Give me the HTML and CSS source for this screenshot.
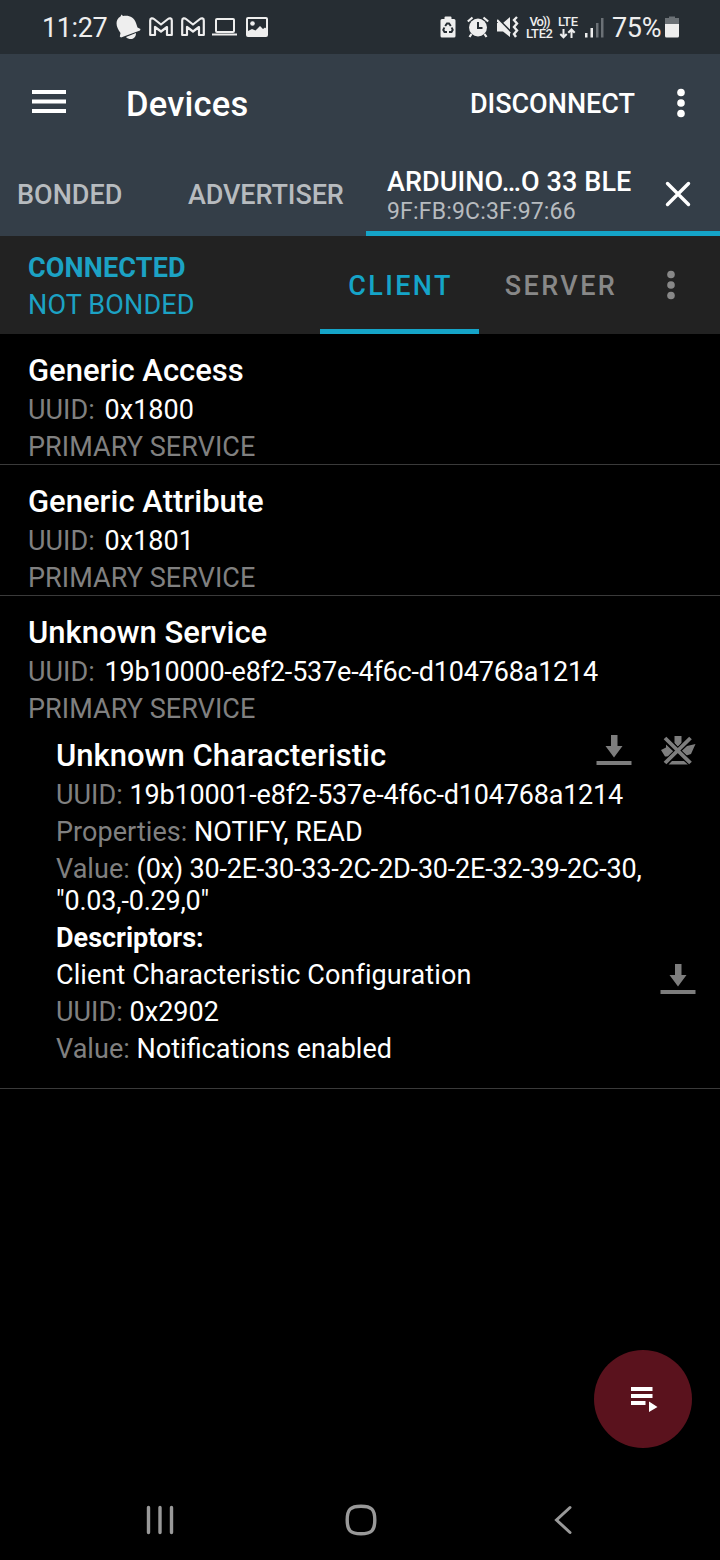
FILE: index.html
```html
<!DOCTYPE html>
<html lang="en">
<head>
<meta charset="utf-8">
<title>Devices</title>
<link rel="stylesheet" href="styles.css">
</head>
<body>
<div class="screen">
  <div class="status">
    <span class="clock">11:27</span>
    <svg class="bell" width="26" height="28" viewBox="0 0 26 28" fill="#eee"><path d="M4.500 3.500 5.500 1.500 7 3C13 2 18 4 20 10L21.500 14.500 24.500 16 24 17.500 5 24.500 3.800 23.500 4.500 20C0 14 -1.500 7 4.500 3.500Z"/><path d="M10 24 20 20C20 23.500 18 26 15 26 13 26 11 25.500 10 24Z"/></svg>
    <svg class="mail" width="24" height="20" viewBox="0 0 24 20" fill="none" stroke="#eee" stroke-width="2.200" stroke-linejoin="round"><path d="M1.200 3.500C1.200 1 3.500.800 5 2L12 7.500 19 2C20.500.800 22.800 1 22.800 3.500V18H18V10L12 14.500 6 10V18H1.200Z"/></svg>
    <svg class="mail" width="24" height="20" viewBox="0 0 24 20" fill="none" stroke="#eee" stroke-width="2.200" stroke-linejoin="round"><path d="M1.200 3.500C1.200 1 3.500.800 5 2L12 7.500 19 2C20.500.800 22.800 1 22.800 3.500V18H18V10L12 14.500 6 10V18H1.200Z"/></svg>
    <svg class="laptop" width="25" height="20" viewBox="0 0 25 20"><rect x="4" y="2" width="18" height="13" rx="1" fill="none" stroke="#eee" stroke-width="2"/><path d="M0 16.500H25V18.500H0Z" fill="#eee"/></svg>
    <svg class="photo" width="22" height="20" viewBox="0 0 22 20"><rect x="1" y="1" width="20" height="18" rx="1" fill="none" stroke="#eee" stroke-width="2"/><circle cx="6.500" cy="6.500" r="2.300" fill="#eee"/><path d="M1 14.500 6 12 9.500 13.500 14 9 17 12 19 10.500 21 12V19H1Z" fill="#eee"/></svg>
    <div class="status-right">
      <svg width="16" height="22" viewBox="0 0 16 22"><path d="M4.500 3V1.500Q4.500.500 5.500.500H10.500Q11.500.500 11.500 1.500V3H14Q15.500 3 15.500 4.500V20Q15.500 21.500 14 21.500H2Q.500 21.500.500 20V4.500Q.500 3 2 3Z" fill="#eee"/><g fill="none" stroke="#262d33" stroke-width="2"><path d="M5.200 10 7 7.500H9L10.800 10"/><path d="M4.300 11.500 3.300 14 4.500 16H7"/><path d="M11.700 11.500 12.700 14 11.500 16H9"/></g></svg>
      <svg class="alarm" width="22" height="22" viewBox="0 0 22 22"><circle cx="11" cy="11.500" r="9" fill="#eee"/><path d="M.8 5.500 5.500 1.500M21.200 5.500 16.500 1.500M4.500 18 2.500 21M17.500 18 19.500 21" fill="none" stroke="#eee" stroke-width="2.200"/><path d="M11 6V12H15.500" fill="none" stroke="#262d33" stroke-width="2"/></svg>
      <svg class="mute" width="22" height="22" viewBox="0 0 22 22"><path d="M0 7H6L13 1V21L6 15.500H0Z" fill="#eee"/><path d="M0 2 14 16" stroke="#262d33" stroke-width="2"/><path d="M0 4 13 17.500" stroke="#eee" stroke-width="2.400"/><path d="M20 1 17 4 20 7.500 17 11 20 14.500 17 18 19 21" fill="none" stroke="#eee" stroke-width="2.400"/></svg>
      <svg class="volte" width="54" height="26" viewBox="0 0 54 26"><g class="tiny"><text x="3.500" y="11.500" textLength="21">Vo))</text><text x="0" y="23.500" textLength="27">LTE2</text><text x="32" y="12" textLength="20">LTE</text></g><path d="M37.500 15V23M34.300 20 37.500 23.300 40.700 20M45.500 24V15.500M42.300 18.800 45.500 15.500 48.700 18.800" fill="none" stroke="#eee" stroke-width="2"/></svg>
      <svg class="signal" width="19" height="21" viewBox="0 0 19 21"><path d="M0 16H2.500V20.500H0ZM5.500 11H8V20.500H5.500Z" fill="#eee"/><path d="M11 6H13.500V20.500H11ZM16 1H18.500V20.500H16Z" fill="#6b7176"/></svg>
      <span class="percent">75%</span>
      <svg class="battery" width="14" height="22" viewBox="0 0 14 22"><path d="M4 2V.5H10V2H14V8H0V2Z" fill="#6b7176"/><path d="M0 8H14V20Q14 21.500 12.500 21.500H1.500Q0 21.500 0 20Z" fill="#eee"/></svg>
    </div>
  </div>

  <div class="toolbar">
    <svg class="menu" width="34" height="24" viewBox="0 0 34 24" fill="#fff"><path d="M0 0H34V4H0ZM0 9.500H34V13.500H0ZM0 19H34V23H0Z"/></svg>
    <h1 class="title">Devices</h1>
    <span class="disconnect">DISCONNECT</span>
    <svg class="dots" width="8" height="30" viewBox="0 0 8 30" fill="#fff"><circle cx="4" cy="4.500" r="3.800"/><circle cx="4" cy="15" r="3.800"/><circle cx="4" cy="25.500" r="3.800"/></svg>
  </div>

  <div class="tabs">
    <span class="tab bonded">BONDED</span>
    <span class="tab advertiser">ADVERTISER</span>
    <div class="tab-device">
      <div>
        <div class="device-name">ARDUINO…O 33 BLE</div>
        <div class="device-mac">9F:FB:9C:3F:97:66</div>
      </div>
      <svg class="close" width="26" height="26" viewBox="0 0 26 26" fill="none" stroke="#fff" stroke-width="3.400" stroke-linecap="round"><path d="M2.500 2.500 23.500 23.500M23.500 2.500 2.500 23.500"/></svg>
    </div>
  </div>

  <div class="connection">
    <div class="state"><div class="connected">CONNECTED</div><div class="not-bonded">NOT BONDED</div></div>
    <div class="subtab active">CLIENT</div>
    <div class="subtab">SERVER</div>
    <svg class="more" width="8" height="30" viewBox="0 0 8 30" fill="#888"><circle cx="4" cy="4.500" r="3.800"/><circle cx="4" cy="15" r="3.800"/><circle cx="4" cy="25.500" r="3.800"/></svg>
  </div>

  <div class="service">
    <h2>Generic Access</h2>
    <p class="gap"><i>UUID:</i> 0x1800</p>
    <p><i>PRIMARY SERVICE</i></p>
  </div>
  <div class="service">
    <h2>Generic Attribute</h2>
    <p class="gap"><i>UUID:</i> 0x1801</p>
    <p><i>PRIMARY SERVICE</i></p>
  </div>
  <div class="service last">
    <h2>Unknown Service</h2>
    <p class="gap"><i>UUID:</i> <span class="hex">19b10000-e8f2-537e-4f6c-d104768a1214</span></p>
    <p><i>PRIMARY SERVICE</i></p>
    <div class="characteristic">
      <div class="row">
        <h2>Unknown Characteristic</h2>
        <div class="actions">
          <svg width="36" height="32" viewBox="0 0 36 32" fill="#7d7d7d"><path d="M15 0H21.500V11H26.500L18 22.500 9.500 11H15ZM.5 26H35.500V30H.5Z"/></svg>
          <svg class="notify" width="36" height="32" viewBox="0 0 36 32"><path d="M14.500 1H21.500V8L18 12 14.500 8ZM1 15 6 12.500 6 9.500 14 17 9 21.500 5 21.500ZM35.500 9 31 19 26.500 20.500 21 16.500 27 11ZM8.500 29.500 12 26H24L28 29.500Z" fill="#7d7d7d"/><path d="M5 3 30.500 28M30.500 3 5 28" stroke="#000" stroke-width="5.500"/><path d="M5 3 30.500 28M30.500 3 5 28" stroke="#7d7d7d" stroke-width="3.800"/></svg>
        </div>
      </div>
      <p><i>UUID:</i> <span class="hex">19b10001-e8f2-537e-4f6c-d104768a1214</span></p>
      <p><i>Properties:</i> NOTIFY, READ</p>
      <p><i>Value:</i> <span class="hex">(0x) 30-2E-30-33-2C-2D-30-2E-32-39-2C-30,<br>"0.03,-0.29,0"</span></p>
      <p><b>Descriptors:</b></p>
      <div class="row">
        <p class="descriptor">Client Characteristic Configuration</p>
        <svg class="read" width="36" height="32" viewBox="0 0 36 32" fill="#7d7d7d"><path d="M15 0H21.500V11H26.500L18 22.500 9.500 11H15ZM.5 26H35.500V30H.5Z"/></svg>
      </div>
      <p><i>UUID:</i> 0x2902</p>
      <p><i>Value:</i> Notifications enabled</p>
    </div>
  </div>

  <div class="bottom">
    <div class="fab"><svg width="28" height="27" viewBox="0 0 28 27" fill="#fff"><path d="M0 1H21.500V5H0ZM0 8H21.500V12H0ZM0 15H14.500V19H0ZM18 15.500 26.500 21 18 26Z"/></svg></div>
    <div class="nav">
      <svg width="28" height="30" viewBox="0 0 28 30" stroke="#999" stroke-width="3.400" stroke-linecap="round"><path d="M2.500 2.500V27.500M14 2.500V27.500M25.500 2.500V27.500"/></svg>
      <svg class="home" width="32" height="32" viewBox="0 0 32 32" fill="none" stroke="#999" stroke-width="3.400"><path d="M16 2.200C26.500 2.200 29.800 5.500 29.800 16S26.500 29.800 16 29.800 2.200 26.500 2.200 16 5.500 2.200 16 2.200Z"/></svg>
      <svg width="18" height="30" viewBox="0 0 18 30" fill="none" stroke="#999" stroke-width="3" stroke-linecap="round"><path d="M16 2.500 2.500 15 16 27.500"/></svg>
    </div>
  </div>
</div>
</body>
</html>
```
FILE: styles.css
```css
* { box-sizing: border-box; }
body { margin: 0; background: #000; }
svg { display: block; flex: none; }
h1, h2, p { margin: 0; }
i { font-style: normal; color: #808080; letter-spacing: 0.05px; }
.screen {
  width: 720px; height: 1560px; overflow: hidden;
  display: flex; flex-direction: column;
  background: #000; color: #fff;
  font-family: Roboto, "Liberation Sans", sans-serif;
  font-size: 27px; line-height: 32px; white-space: nowrap;
}

.status { height: 54px; flex: none; display: flex; align-items: center; padding: 0 41px 0 42px; background: #262d33; color: #eee; }
.clock { width: 74px; padding-top: 2px; font-size: 27px; letter-spacing: -0.4px; }
.bell { margin-top: -1px; }
.mail { margin-left: 7px; }
.mail + .mail { margin-left: 8px; }
.laptop { margin-left: 7px; }
.photo { margin-left: 9px; }
.status-right { margin-left: auto; display: flex; align-items: center; }
.alarm { margin-left: 11px; }
.mute { margin-left: 8px; }
.volte { margin-left: 7px; }
.tiny { font-size: 13px; font-weight: 500; fill: #eee; }
.signal { margin-left: 5px; }
.percent { margin-left: 8px; padding-top: 2px; width: 48px; letter-spacing: -0.3px; }
.battery { margin-left: 5px; }

.toolbar { height: 100px; flex: none; display: flex; align-items: center; padding: 0 35px 0 32px; background: #343e48; }
.menu { margin-top: -4px; }
.title { margin-left: 60px; font-size: 34.5px; font-weight: 500; letter-spacing: 0.2px; }
.disconnect { margin-left: auto; font-weight: 500; }
.dots { margin: -2px 0 0 42px; }

.tabs { height: 82px; flex: none; display: flex; background: #343e48; }
.tab { padding-top: 25px; color: #b7bbbf; font-weight: 500; }
.bonded { width: 188px; padding-left: 17px; }
.advertiser { width: 178px; letter-spacing: -0.1px; }
.tab-device { flex: 1; display: flex; align-items: flex-start; padding: 12px 29px 0 21px; border-bottom: 5px solid #15a4c8; }
.device-name { font-weight: 500; letter-spacing: 0.1px; }
.device-mac { font-size: 23px; line-height: 27px; letter-spacing: 0.18px; color: #b7bbbf; }
.close { margin: 15px 0 0 auto; }

.connection { height: 98px; flex: none; display: flex; align-items: flex-start; padding-left: 28px; background: #222; }
.state { width: 292px; padding-top: 16px; color: #1ca2c4; letter-spacing: 0.15px; }
.connected { margin-bottom: 5px; font-weight: 700; }
.subtab { width: 159px; height: 98px; padding: 34px 0 0 5px; text-align: center; font-weight: 500; letter-spacing: 2.400px; color: #888; }
.subtab.active { padding-left: 2px; color: #15a4c8; border-bottom: 5px solid #15a4c8; }
.more { margin: 34px 0 0 29px; }

.service { flex: none; display: flex; flex-direction: column; gap: 5px; padding: 18px 25px 1px 28px; border-bottom: 1px solid #3a3a3a; }
.service h2 { font-size: 31px; line-height: 37px; font-weight: 500; }
.gap i { margin-right: 3px; }
.hex { letter-spacing: -0.2px; }
.descriptor { letter-spacing: 0.1px; }
.last { padding-bottom: 23px; }
.characteristic { display: flex; flex-direction: column; gap: 5px; margin-top: 7px; padding-left: 28px; }
.row { display: flex; justify-content: space-between; }
.actions { display: flex; gap: 28px; margin: -2px -1px 0 0; height: 32px; }
.read { margin: 5px -1px -5px 0; }

.bottom { flex: 1; display: flex; flex-direction: column; justify-content: flex-end; }
.fab { align-self: flex-end; width: 98px; height: 98px; margin-right: 28px; margin-bottom: 32px; padding: 1px 0 0 3px; border-radius: 50%; background: #5a121d; display: flex; align-items: center; justify-content: center; }
.nav { height: 80px; display: flex; align-items: center; justify-content: space-between; padding: 0 148px 0 146px; }
.home { margin: 0 3px 0 -3px; }
```
